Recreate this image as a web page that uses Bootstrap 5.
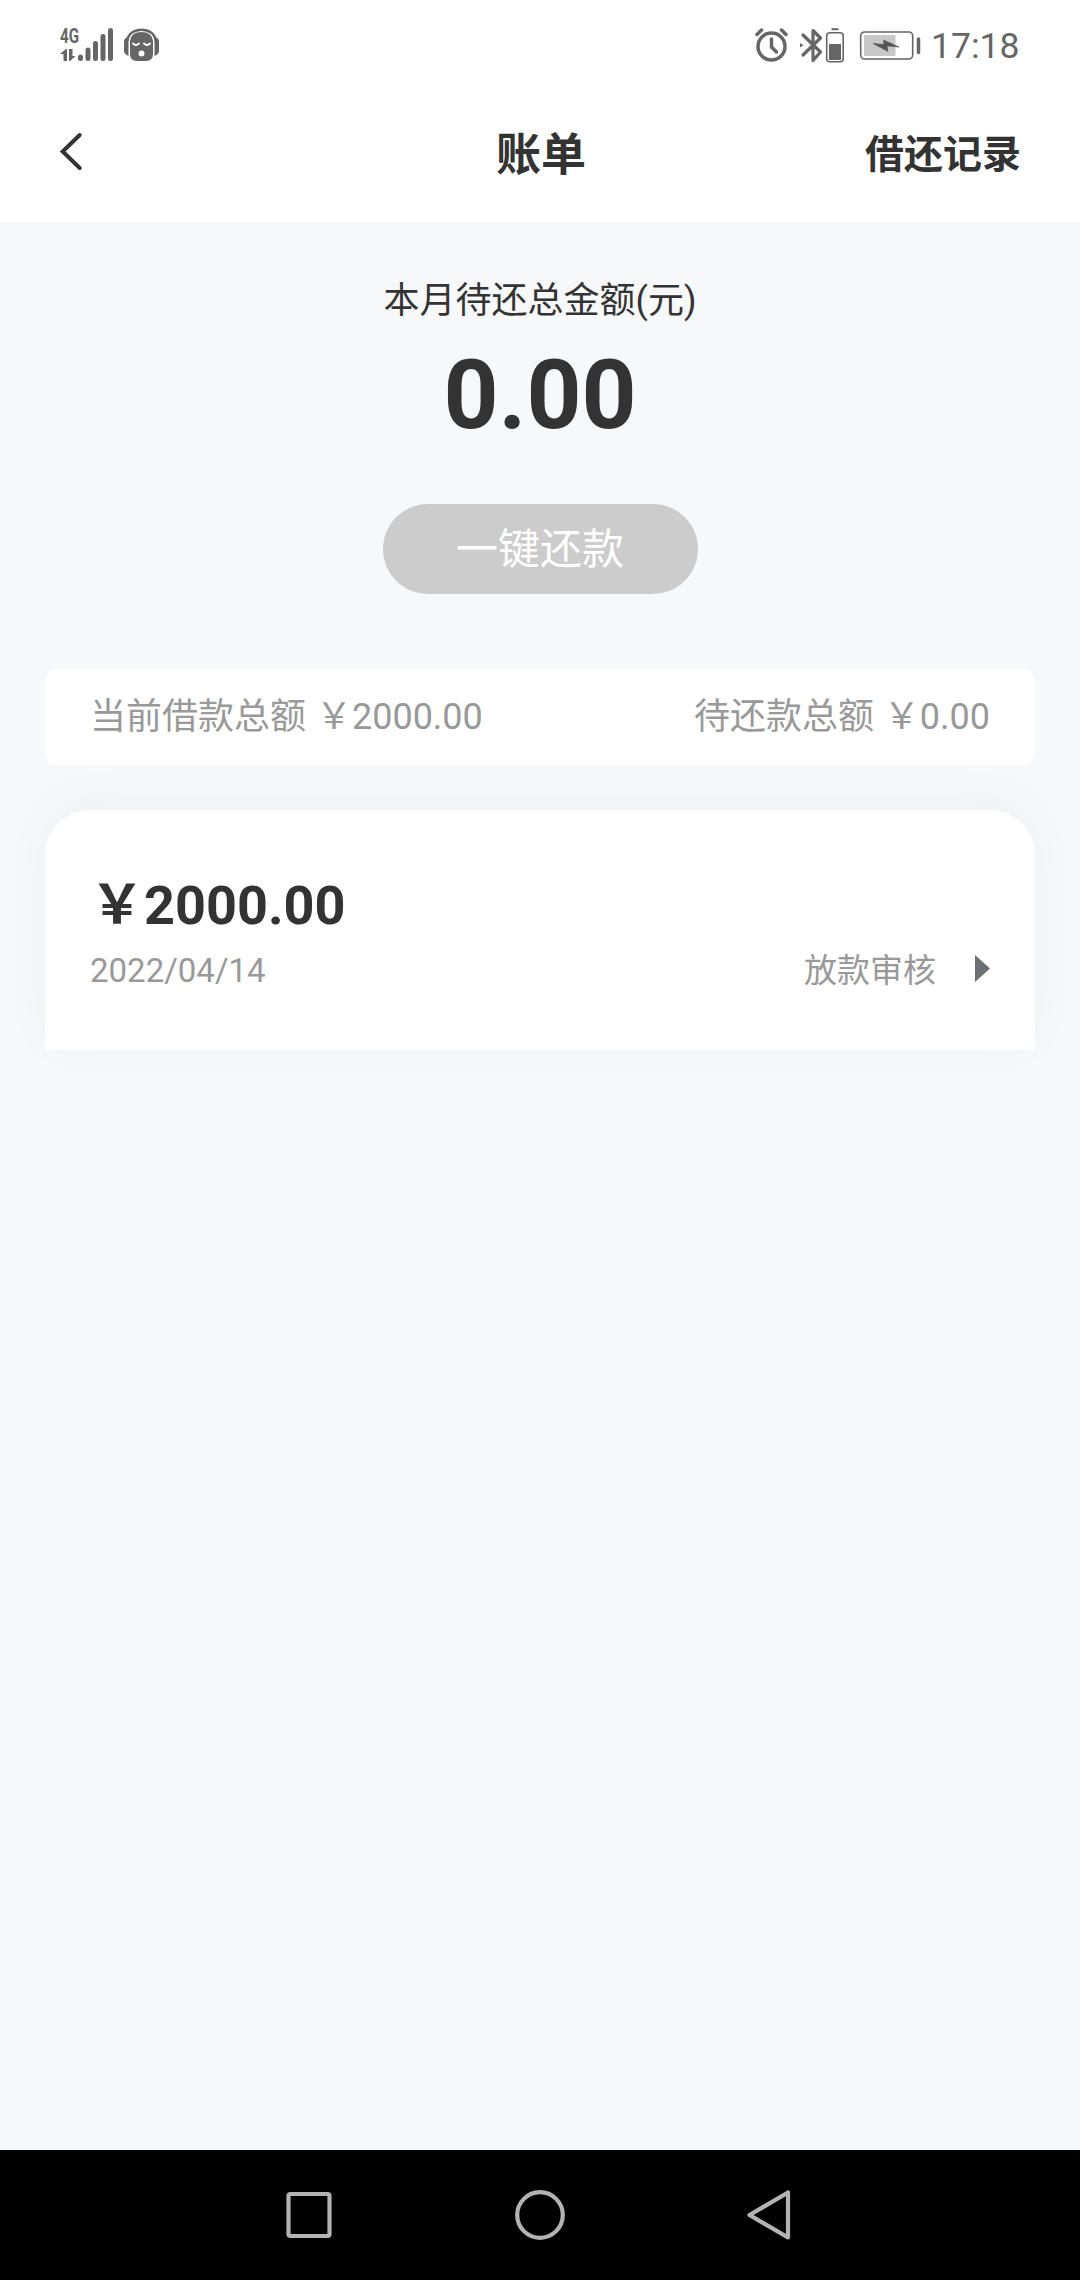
<!DOCTYPE html>
<html lang="zh-CN">
<head>
<meta charset="utf-8">
<meta name="viewport" content="width=device-width, initial-scale=1">
<title>账单</title>
<link href="https://cdn.jsdelivr.net/npm/bootstrap@5.3.0/dist/css/bootstrap.min.css" rel="stylesheet">
<style>
body{font-family:Roboto,"Noto Sans CJK SC",sans-serif;background:#f7f8fa;color:#333;min-height:2280px;line-height:1}
svg{display:block;flex:none}
.statusbar{height:90px;padding:2px 61px 0 56px;color:#666}
.clock{font-size:35.500px;line-height:40px;width:88px;white-space:nowrap}
.appbar{height:132px;padding:35px 59px 0}
.appbar>*{flex:1 1 0}
.back{padding-top:7px}
.page-title{font-size:45px;line-height:61px;padding-left:2px}
.records{font-size:39px;line-height:60px}
.caption{font-size:36px;line-height:50px;padding-top:54px}
.total{font-size:96px;line-height:112px;padding-top:13px}
.pay-btn{width:315px;height:90px;border-radius:45px;font-size:42px;line-height:92px;background:#ccc;color:#fff;margin-top:53px}
.bills{padding:75px 45px 0}
.summary{position:relative;z-index:1;height:96px;border-radius:12px;padding:0 45px;font-size:36px;color:#999;word-spacing:1px}
.bill{height:240px;border-radius:45px 45px 0 0;margin-top:45px;padding:0 45px;box-shadow:0 -9px 50px rgba(0,0,0,.035);color:#999;font-size:33px}
.amount{font-size:54px;line-height:64px;color:#333;padding-top:64px}
.bill-row{line-height:40px;margin-top:13px}
.arrow{margin:-5px 0 0 39px}
.navkeys{height:130px;background:#000}
</style>
</head>
<body class="d-flex flex-column">
<div class="statusbar bg-white d-flex align-items-center justify-content-between">
  <svg width="110" height="60" viewBox="56 16 110 60" fill="#666">
    <text x="60" y="42.500" font-family="Roboto" font-weight="700" font-size="21" textLength="19" lengthAdjust="spacingAndGlyphs">4G</text>
    <path d="M60 54l6-5h1v12h-3.500v-7zM69 49h3.500v7h3l-5.500 5h-1z"/>
    <g stroke="#666" stroke-width="5" stroke-linecap="round"><path d="M80.500 57v1.500M88 50v8.500M95.500 43.500v15M103 36.500v22M110.500 30.500v28"/></g>
    <path d="M128.500 37Q124 38 124 41v10q0 3 4.500 5zM154.500 37q4.500 1 4.500 4v10q0 3-4.500 5z"/>
    <path d="M127.500 41C128 26 155 26 155.500 41" fill="none" stroke="#666" stroke-width="2.500"/>
    <path d="M130 41Q131 32 141.500 32T153 41v13q0 7-7 7h-9q-7 0-7-7z"/>
    <path d="M133 43.500q3 3 6 0M144 43.500q3 3 6 0" fill="none" stroke="#fff" stroke-width="1.800" stroke-linecap="round"/>
    <circle cx="141.500" cy="53.500" r="3" fill="#fff"/>
  </svg>
  <div class="d-flex align-items-center">
    <svg width="176" height="40" viewBox="755 26 176 40" fill="none" stroke="#666">
      <circle cx="771.500" cy="46.500" r="13.500" stroke-width="3.500"/>
      <path d="M771.500 39v8l5 5" stroke-width="3.500" stroke-linecap="round"/>
      <path d="M757 34.500l4.500-4.500M786 34.500l-4.500-4.500" stroke-width="3.500" stroke-linecap="round"/>
      <path d="M803 35l17.500 17-7.500 8.500V30.500l7.500 7.500L803 55" stroke-width="3.200" stroke-linecap="round" stroke-linejoin="round"/>
      <path d="M800 43l3.500 2.200-3.500 2.200z" fill="#666" stroke="none"/>
      <rect x="826.700" y="32.700" width="16.500" height="29" rx="3" stroke-width="1.600"/>
      <path d="M831.500 29.200h7" stroke-width="2"/>
      <path d="M829 44h12v16h-12z" fill="#666" stroke="none"/>
      <rect x="860.700" y="32" width="52" height="27" rx="4" stroke-width="1.600"/>
      <path d="M864 35h31.500v21H864z" fill="#c8c8c8" stroke="none"/>
      <path d="M873 43.500l11 1-.5-4.500L899 47l-12-1 1 5.500z" fill="#555" stroke="#555" stroke-width=".6"/>
      <path d="M918.500 39v13.500" stroke-width="3.500" stroke-linecap="round"/>
    </svg>
    <div class="clock">17:18</div>
  </div>
</div>
<header class="appbar bg-white d-flex align-items-start">
  <div class="back"><svg width="26" height="40" viewBox="0.8 0 26 40" fill="none" stroke="#333" stroke-width="4" stroke-linecap="round"><path d="M21.500 3L4.500 19.500 21.500 36"/></svg></div>
  <div class="page-title fw-bold text-center">账单</div>
  <div class="records fw-bold text-end">借还记录</div>
</header>
<main class="flex-grow-1">
  <section class="d-flex flex-column align-items-center">
    <div class="caption">本月待还总金额(元)</div>
    <div class="total fw-bold">0.00</div>
    <button type="button" class="pay-btn border-0 p-0">一键还款</button>
  </section>
  <section class="bills">
    <div class="summary bg-white d-flex align-items-center justify-content-between">
      <span>当前借款总额 ￥2000.00</span><span>待还款总额 ￥0.00</span>
    </div>
    <div class="bill bg-white">
      <div class="amount fw-bold">￥2000.00</div>
      <div class="bill-row d-flex align-items-center justify-content-between">
        <span>2022/04/14</span>
        <span class="d-flex align-items-center">放款审核
          <svg class="arrow" width="15" height="27" viewBox="0 0 15 27" fill="#6b7075"><path d="M0 0l15 13.500L0 27z"/></svg></span>
      </div>
    </div>
  </section>
</main>
<footer class="navkeys">
  <svg width="1080" height="130" viewBox="0 2150 1080 130" fill="none" stroke="#b3b3b3" stroke-width="4.200" stroke-linejoin="round">
    <rect x="288.500" y="2194" width="41" height="42" rx="2"/>
    <circle cx="540" cy="2215" r="22.800"/>
    <path d="M788 2192.500v45L749.500 2215z"/>
  </svg>
</footer>
<script src="https://cdn.jsdelivr.net/npm/bootstrap@5.3.0/dist/js/bootstrap.bundle.min.js"></script>
</body>
</html>
